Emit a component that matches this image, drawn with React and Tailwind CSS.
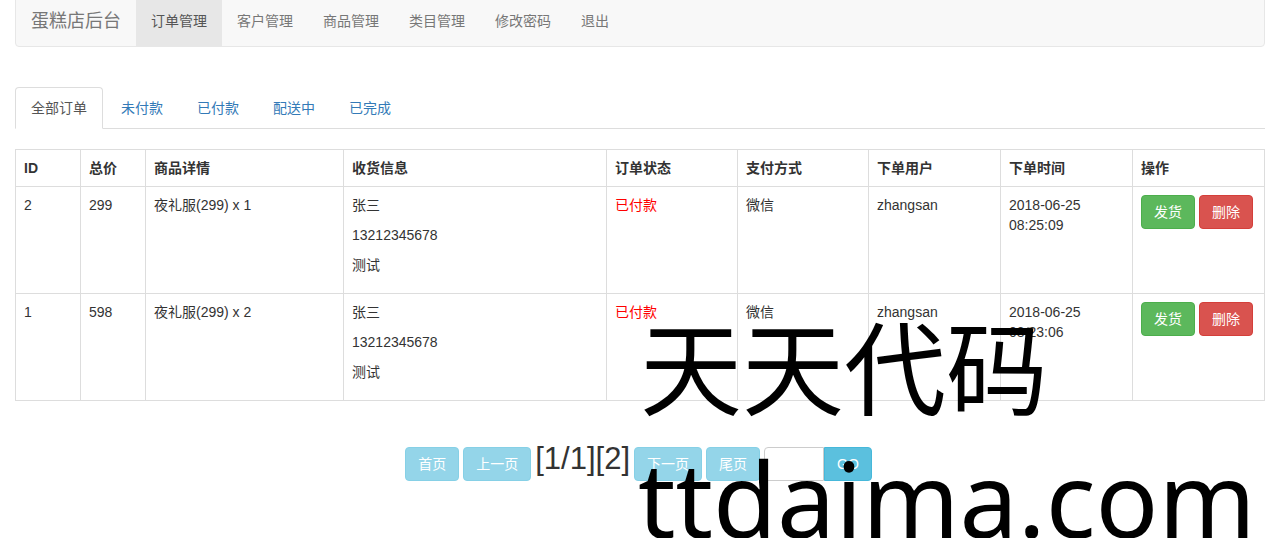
import React from "react";

const NAV = ["订单管理", "客户管理", "商品管理", "类目管理", "修改密码", "退出"];
const TABS = ["全部订单", "未付款", "已付款", "配送中", "已完成"];
const COLS = [
  ["ID", 65],
  ["总价", 65],
  ["商品详情", 198],
  ["收货信息", 263],
  ["订单状态", 131],
  ["支付方式", 131],
  ["下单用户", 132],
  ["下单时间", 132],
  ["操作", 132],
];

const ORDERS = [
  { id: 2, total: 299, detail: "夜礼服(299) x 1", time: "2018-06-25 08:25:09" },
  { id: 1, total: 598, detail: "夜礼服(299) x 2", time: "2018-06-25 08:23:06" },
];

const font = {
  fontFamily: '"Liberation Sans", Arial, "Noto Sans CJK SC", sans-serif',
};

function PageBtn({ children }) {
  return (
    <button className="h-[34px] px-3 text-sm leading-5 text-white bg-[#5bc0de] border border-[#46b8da] rounded-[4px] opacity-[.65]">
      {children}
    </button>
  );
}

export default function App() {
  return (
    <div className="relative min-h-[538px] overflow-hidden bg-white text-sm leading-5 text-[#333]" style={font}>
      {/* navbar */}
      <div className="ml-[15px] w-[1250px] -mt-[5px] h-[52px] flex bg-[#f8f8f8] border border-[#e7e7e7] rounded-[4px]">
        <div className="px-[15px] pt-[15px] text-[18px] leading-5 text-[#777]">蛋糕店后台</div>
        {NAV.map((n, i) => (
          <div
            key={n}
            className={
              "px-[15px] py-[15px] " +
              (i === 0 ? "bg-[#e7e7e7] text-[#555]" : "text-[#777]")
            }
          >
            {n}
          </div>
        ))}
      </div>

      {/* tabs */}
      <div className="ml-[15px] w-[1250px] mt-[40px] flex border-b border-[#ddd]">
        {TABS.map((t, i) => (
          <div
            key={t}
            className={
              "mr-[2px] -mb-px px-[15px] py-[10px] border rounded-t-[4px] " +
              (i === 0
                ? "bg-white border-[#ddd] border-b-white text-[#555]"
                : "border-transparent text-[#337ab7]")
            }
          >
            {t}
          </div>
        ))}
      </div>

      {/* table */}
      <table className="ml-[15px] mt-[20px] w-[1250px] table-fixed border-collapse">
        <colgroup>
          {COLS.map(([c, w]) => (
            <col key={c} style={{ width: w }} />
          ))}
        </colgroup>
        <thead>
          <tr>
            {COLS.map(([c]) => (
              <th key={c} className="border border-[#ddd] p-2 text-left font-bold align-bottom">
                {c}
              </th>
            ))}
          </tr>
        </thead>
        <tbody>
          {ORDERS.map((o) => (
            <tr key={o.id}>
              <td className="border border-[#ddd] p-2 align-top">{o.id}</td>
              <td className="border border-[#ddd] p-2 align-top">{o.total}</td>
              <td className="border border-[#ddd] p-2 align-top">{o.detail}</td>
              <td className="border border-[#ddd] p-2 align-top">
                <p className="mb-[10px]">张三</p>
                <p className="mb-[10px]">13212345678</p>
                <p className="mb-[10px]">测试</p>
              </td>
              <td className="border border-[#ddd] p-2 align-top text-[#f00]">已付款</td>
              <td className="border border-[#ddd] p-2 align-top">微信</td>
              <td className="border border-[#ddd] p-2 align-top">zhangsan</td>
              <td className="border border-[#ddd] p-2 align-top">{o.time}</td>
              <td className="border border-[#ddd] p-2 align-top">
                <div className="flex gap-[4px]">
                  <button className="h-[34px] px-3 text-white bg-[#5cb85c] border border-[#4cae4c] rounded-[4px]">
                    发货
                  </button>
                  <button className="h-[34px] px-3 text-white bg-[#d9534f] border border-[#d43f3a] rounded-[4px]">
                    删除
                  </button>
                </div>
              </td>
            </tr>
          ))}
        </tbody>
      </table>

      {/* pagination */}
      <div className="mt-[46px] flex justify-center items-start gap-[4px]">
        <PageBtn>首页</PageBtn>
        <PageBtn>上一页</PageBtn>
        <span className="-mt-[4px] text-[31px] leading-none">[1/1][2]</span>
        <PageBtn>下一页</PageBtn>
        <PageBtn>尾页</PageBtn>
        <div className="flex">
          <input className="w-[60px] h-[34px] border border-[#ccc] rounded-l-[4px] outline-none px-2" />
          <button className="h-[34px] px-3 text-white bg-[#5bc0de] border border-[#46b8da] rounded-r-[4px]">
            GO
          </button>
        </div>
      </div>

      {/* watermark */}
      <div
        className="absolute left-[640px] top-[313px] text-[102px] leading-none text-black whitespace-nowrap"
        style={{ fontFamily: '"Noto Sans CJK SC", sans-serif' }}
      >
        天天代码
      </div>
      <div
        className="absolute left-[638px] top-[446px] text-[104px] leading-none text-black whitespace-nowrap"
        style={{ fontFamily: '"Noto Sans", sans-serif' }}
      >
        ttdaima.com
      </div>
    </div>
  );
}
